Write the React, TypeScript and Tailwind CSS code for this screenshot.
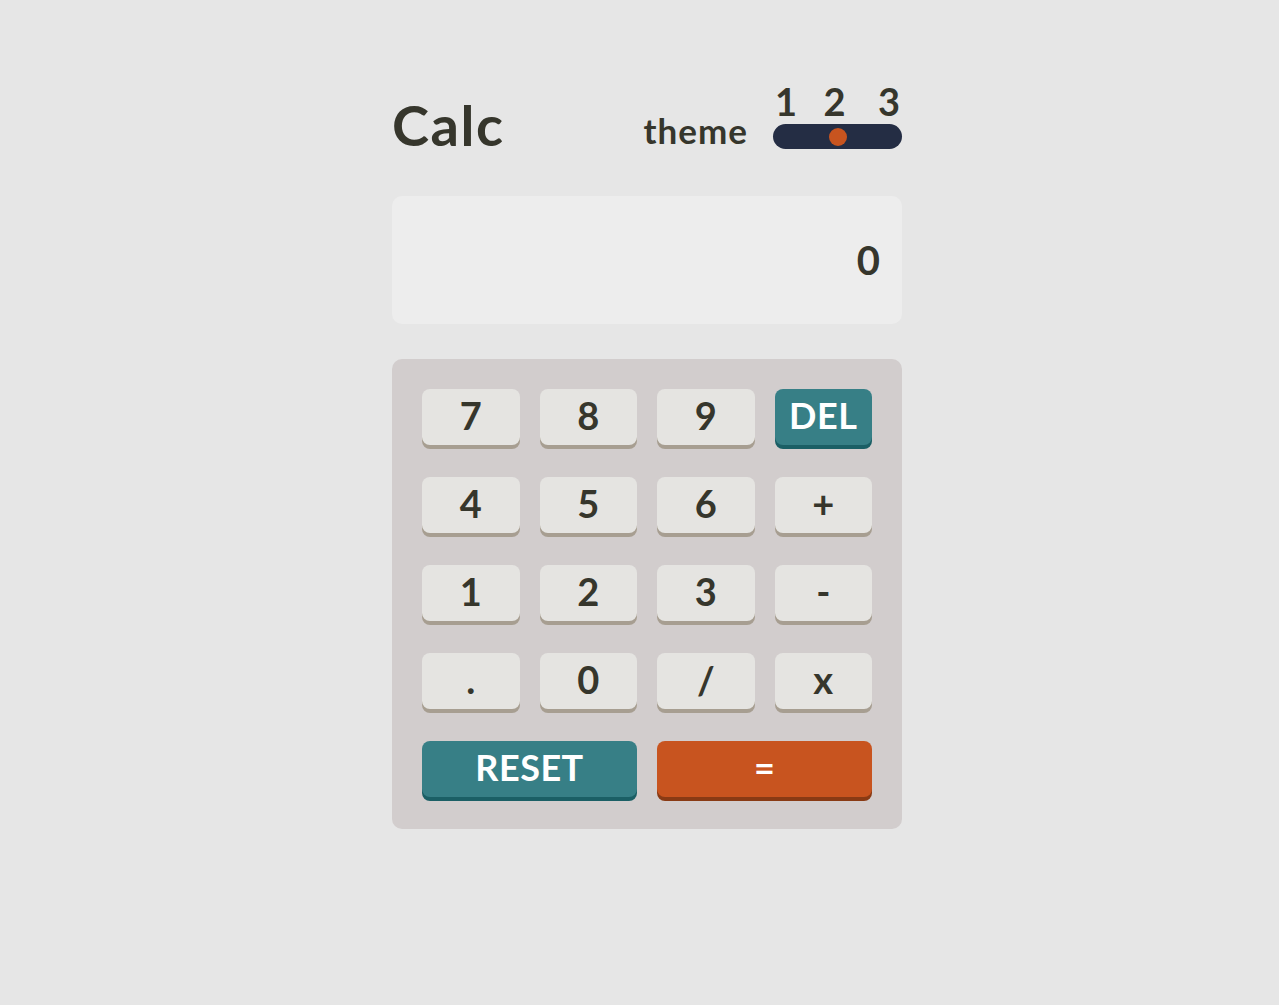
import React from "react";

const font = { fontFamily: "Lato, 'Noto Sans', sans-serif" };

type K = { label: string; kind?: "num" | "del" | "reset" | "eq"; span?: boolean };

const keys: K[] = [
  { label: "7" }, { label: "8" }, { label: "9" }, { label: "DEL", kind: "del" },
  { label: "4" }, { label: "5" }, { label: "6" }, { label: "+" },
  { label: "1" }, { label: "2" }, { label: "3" }, { label: "-" },
  { label: "." }, { label: "0" }, { label: "/" }, { label: "x" },
  { label: "RESET", kind: "reset", span: true }, { label: "=", kind: "eq", span: true },
];

function Key({ k }: { k: K }) {
  const base = "h-[56px] rounded-[8px] flex items-center justify-center font-bold leading-none pb-[5px]";
  if (k.kind === "del")
    return <button className={`${base} bg-[#377f86] shadow-[0_4px_0_#1b5f65] text-white text-[36px] tracking-[0.5px]`}>{k.label}</button>;
  if (k.kind === "reset")
    return <button className={`${base} col-span-2 bg-[#377f86] shadow-[0_4px_0_#1b5f65] text-white text-[36px] tracking-[0.5px]`}>{k.label}</button>;
  if (k.kind === "eq")
    return <button className={`${base} col-span-2 bg-[#c8541f] shadow-[0_4px_0_#893a14] text-white text-[36px]`}>{k.label}</button>;
  return <button className={`${base} bg-[#e5e4e1] shadow-[0_4px_0_#a79e91] text-[#36362c] text-[38px]`}>{k.label}</button>;
}

export default function App() {
  return (
    <div className="min-h-screen bg-[#e6e6e6] flex justify-center pl-[15px]" style={font}>
      <div className="w-[510px] pt-[82px]">
        <div className="flex justify-between items-end text-[#36362c]">
          <div className="text-[56px] font-bold leading-none mb-[-4px] tracking-[1.5px]">Calc</div>
          <div className="flex items-end gap-[25px]">
            <div className="text-[35px] font-bold leading-none mb-[1px] tracking-[1px]">theme</div>
            <div className="w-[129px] flex flex-col">
              <div className="flex justify-between px-[2px] text-[38px] font-bold leading-none h-[38px] mb-[4px]">
                <span>1</span><span className="mr-[6px]">2</span><span>3</span>
              </div>
              <div className="h-[25px] rounded-full bg-[#242d44] flex items-center justify-center">
                <div className="w-[18px] h-[18px] rounded-full bg-[#c8541f]" />
              </div>
            </div>
          </div>
        </div>
        <div className="mt-[47px] h-[128px] rounded-[10px] bg-[#ededed] flex items-center justify-end pr-[22px] text-[#36362c] text-[40px] font-bold leading-none">
          0
        </div>
        <div className="mt-[35px] rounded-[10px] bg-[#d2cdcd] px-[30px] pt-[30px] pb-[32px] grid grid-cols-4 gap-x-[20px] gap-y-[32px]">
          {keys.map((k, i) => <Key key={i} k={k} />)}
        </div>
      </div>
    </div>
  );
}
